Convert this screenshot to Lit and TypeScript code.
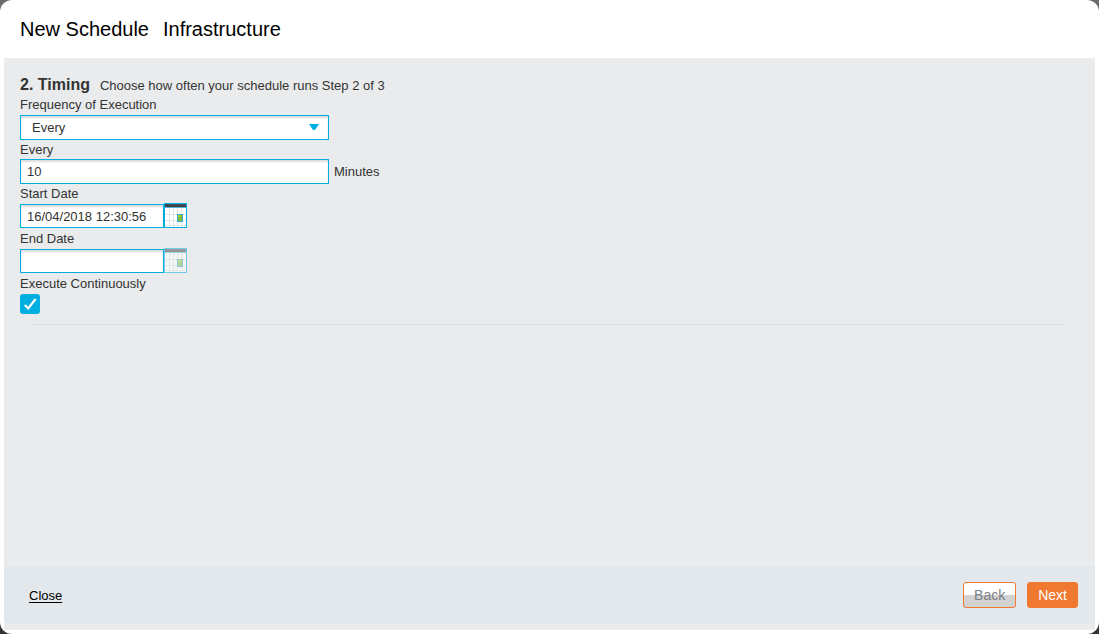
import { LitElement, html, css, svg } from "lit";
import { customElement, property, state } from "lit/decorators.js";

@customElement("calendar-button")
class CalendarButton extends LitElement {
  @property({ type: Boolean }) disabled = false;
  @property() label = "";

  static styles = css`
    :host { display: block; }
    .button { display: block; padding: 0; border: 0; background: none; cursor: pointer; }
    .button:disabled { opacity: 0.5; cursor: default; }
    .icon { display: block; width: 23px; height: 25px; }
  `;

  render() {
    const columns = [5, 9, 13, 17].map((x) => svg`<rect x=${x} y="5" width="1" height="19" fill="#dfe4e7" />`);
    const rows = [11, 17, 22].map((y) => svg`<rect x="1" y=${y} width="21" height="1" fill="#dfe4e7" />`);
    return html`
      <button class="button" type="button" aria-label=${this.label} ?disabled=${this.disabled}>
        <svg class="icon" viewBox="0 0 23 25" shape-rendering="crispEdges" aria-hidden="true">
          <rect width="23" height="25" fill="#00aee0" />
          <rect x="1" y="1" width="21" height="23" fill="#fff" />
          ${columns}${rows}
          <rect x="1" y="1" width="21" height="3" fill="#3d4048" />
          <rect x="3" y="1" width="19" height="1" fill="#50545c" />
          <rect x="1" y="4" width="21" height="1" fill="#55b5d3" />
          <rect x="13" y="11" width="6" height="8" fill="#35aecb" />
          <rect x="14" y="12" width="4" height="6" fill="#7dbb3c" />
          <rect x="14" y="12" width="3" height="2" fill="#b9d432" />
        </svg>
      </button>
    `;
  }
}

@customElement("app-root")
class AppRoot extends LitElement {
  @state() private continuous = true;

  static styles = css`
    :host {
      display: block;
      box-sizing: border-box;
      height: 100vh;
      background: linear-gradient(#6b6b6d, #333436);
      font: 13px/19px "Liberation Sans", Arial, sans-serif;
      color: #333;
    }
    .dialog {
      box-sizing: border-box;
      height: 100%;
      display: flex;
      flex-direction: column;
      padding: 0 4px 4px;
      border-radius: 12px;
      background: #fff;
    }
    .header {
      display: flex;
      align-items: center;
      gap: 14px;
      height: 58px;
      padding: 0 16px;
      color: #000;
      font-size: 20px;
      line-height: 24px;
    }
    .title, .step { margin: 0; font-weight: normal; font-size: inherit; }
    .body {
      flex: 1;
      display: flex;
      flex-direction: column;
      background: #e9ebec;
      padding-bottom: 6px;
    }
    .form { flex: 1; padding: 17px 16px 0; }
    .intro { display: flex; align-items: baseline; gap: 10px; height: 20px; line-height: 20px; }
    .intro .step { font-size: 16px; font-weight: bold; }
    .label { display: block; width: fit-content; }
    .spaced { margin-top: 1px; }
    .control { position: relative; width: 309px; }
    .row { display: flex; align-items: center; gap: 5px; }
    .input {
      display: block;
      box-sizing: border-box;
      width: 309px;
      height: 25px;
      margin: 0;
      padding: 0 6px;
      border: 1px solid #00aee0;
      border-radius: 0;
      background: #fff;
      box-shadow: inset 0 2px 2px #dcdcdc;
      color: #333;
      font: inherit;
      appearance: none;
    }
    .select { padding: 0 11px; }
    .arrow { position: absolute; top: 9px; right: 10px; width: 10px; height: 6px; pointer-events: none; }
    .dates { display: flex; align-items: flex-end; margin-bottom: 1px; }
    .date { width: 144px; height: 24px; }
    .check { position: relative; width: 20px; height: 20px; margin-top: 1px; }
    .box {
      display: block;
      width: 20px;
      height: 20px;
      margin: 0;
      border-radius: 3px;
      background: #00aee0;
      appearance: none;
    }
    .tick { position: absolute; inset: 0; pointer-events: none; }
    .rule { margin: 10px 12px 0; border: 0; border-top: 1px solid #dfe1e3; }
    .footer {
      display: flex;
      align-items: center;
      gap: 11px;
      height: 58px;
      padding: 0 17px 0 25px;
      background: #e3e8ec;
    }
    .close { margin-right: auto; color: #000; text-underline-offset: 2px; }
    .button {
      box-sizing: border-box;
      height: 26px;
      padding: 0 10px;
      border: 1px solid #f07932;
      border-radius: 3px;
      background: #f07932;
      color: #fff;
      font: inherit;
      font-size: 14px;
      cursor: pointer;
    }
    .back { background: linear-gradient(#fff 50%, #d2d2d2 50%); color: #7b7f86; }
  `;

  render() {
    return html`
      <main class="dialog">
        <header class="header">
          <h1 class="title">New Schedule</h1>
          <span>Infrastructure</span>
        </header>
        <div class="body">
          <form class="form">
            <div class="intro">
              <h2 class="step">2. Timing</h2>
              <span>Choose how often your schedule runs Step 2 of 3</span>
            </div>
            <label class="label" for="frequency">Frequency of Execution</label>
            <div class="control spaced">
              <select class="input select" id="frequency"><option>Every</option></select>
              <svg class="arrow" viewBox="0 0 10 6" aria-hidden="true"><path d="M0 0h10L6 6H4z" fill="#00aee0" /></svg>
            </div>
            <label class="label" for="interval">Every</label>
            <div class="row">
              <input class="input" id="interval" type="text" value="10" />
              <span>Minutes</span>
            </div>
            <label class="label" for="start">Start Date</label>
            <div class="dates">
              <input class="input date" id="start" type="text" value="16/04/2018 12:30:56" />
              <calendar-button label="Choose start date"></calendar-button>
            </div>
            <label class="label" for="end">End Date</label>
            <div class="dates">
              <input class="input date" id="end" type="text" />
              <calendar-button label="Choose end date" disabled></calendar-button>
            </div>
            <label class="label" for="continuous">Execute Continuously</label>
            <div class="check">
              <input class="box" id="continuous" type="checkbox" .checked=${this.continuous}
                @change=${(e: Event) => (this.continuous = (e.target as HTMLInputElement).checked)} />
              ${this.continuous
                ? html`<svg class="tick" viewBox="0 0 20 20" aria-hidden="true">
                    <path d="M4.8 11l3.4 3.4L15.6 5" fill="none" stroke="#fff" stroke-width="2.2" />
                  </svg>`
                : null}
            </div>
            <hr class="rule" />
          </form>
          <footer class="footer">
            <a class="close" href="#">Close</a>
            <button class="button back" type="button">Back</button>
            <button class="button" type="button">Next</button>
          </footer>
        </div>
      </main>
    `;
  }
}
